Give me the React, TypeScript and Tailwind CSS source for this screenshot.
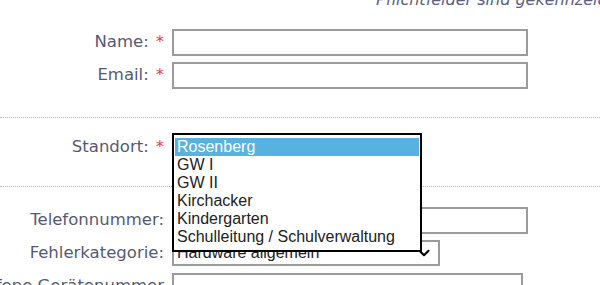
import { ChevronDown } from "lucide-react";

const standorte = ["Rosenberg", "GW I", "GW II", "Kirchacker", "Kindergarten", "Schulleitung / Schulverwaltung"];

const labelCls = "w-[172px] shrink-0 flex justify-end whitespace-nowrap pr-[8px] text-[16.5px] text-[#555a74]";

const Req = () => <span className="ml-[7px] text-[#e23b3b]">*</span>;

const Field = ({ label, width = "w-[356px]", mt }: { label: string; width?: string; mt: string }) => (
  <div className={`flex items-center h-[27px] ${mt}`}>
    <div className={labelCls}>{label}</div>
    <div className={`${width} h-[27px] border-2 border-[#9b9b9b] bg-white`} />
  </div>
);

export default function App() {
  return (
    <div className="w-[600px] h-[285px] overflow-hidden bg-white" style={{ fontFamily: '"DejaVu Sans", Verdana, sans-serif' }}>
      <div className="-mt-[10px] pl-[376px] whitespace-nowrap italic text-[16px] leading-[19px] text-[#5b6080]">
        Pflichtfelder sind gekennzeichnet.
      </div>

      <div className="flex items-center h-[27px] mt-[20px]">
        <div className={labelCls}>
          Name:<Req />
        </div>
        <div className="w-[356px] h-[27px] border-2 border-[#9b9b9b]" />
      </div>
      <div className="flex items-center h-[27px] mt-[6px]">
        <div className={labelCls}>
          Email:<Req />
        </div>
        <div className="w-[356px] h-[27px] border-2 border-[#9b9b9b]" />
      </div>

      <div className="mt-[28px] border-t border-dotted border-[#b5b5b5]" />

      <div className="relative flex items-center h-[27px] mt-[16px]">
        <div className={labelCls}>
          Standort:<Req />
        </div>
        <div className="w-[250px] h-[27px] border-2 border-[#9b9b9b]" />
        <div className="absolute left-[172px] -top-[1px] w-[250px] h-[119px] z-10 border-2 border-black bg-white pt-[3px] px-[1px]" style={{ fontFamily: '"Liberation Sans", Arial, sans-serif' }}>
          {standorte.map((s, i) => (
            <div
              key={s}
              className={`h-[18px] leading-[18px] pl-[2px] text-[16px] whitespace-nowrap ${i === 0 ? "bg-[#58b2e0] text-white" : "text-[#222]"}`}
            >
              {s}
            </div>
          ))}
        </div>
      </div>

      <div className="mt-[25px] border-t border-dotted border-[#b5b5b5]" />

      <Field label="Telefonnummer:" mt="mt-[20px]" />

      <div className="flex items-center h-[26px] mt-[6px]">
        <div className={labelCls}>Fehlerkategorie:</div>
        <div className="w-[268px] h-[26px] border-2 border-[#9b9b9b] flex items-center justify-between pl-[3px] pr-[5px] text-[16px] text-[#222]" style={{ fontFamily: '"Liberation Sans", Arial, sans-serif' }}>
          <span>Hardware allgemein</span>
          <ChevronDown size={18} strokeWidth={2.75} className="text-black" />
        </div>
      </div>

      <Field label="Betroffene Gerätenummer" width="w-[351px]" mt="mt-[7px]" />
    </div>
  );
}
